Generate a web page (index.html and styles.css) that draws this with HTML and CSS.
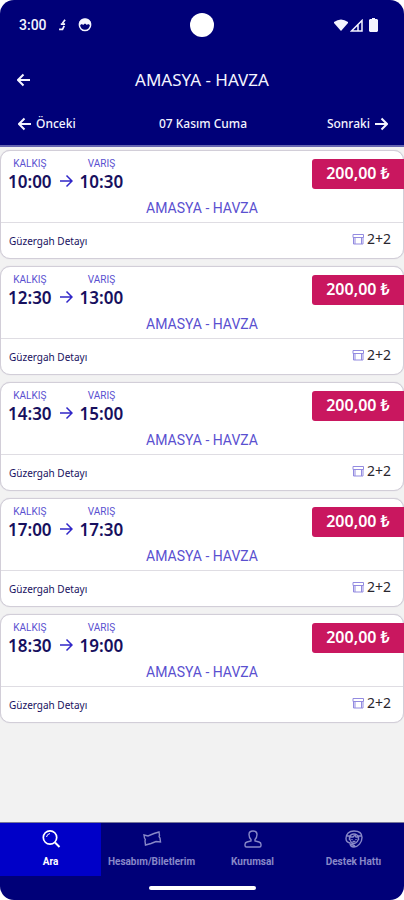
FILE: index.html
```html
<!DOCTYPE html>
<html lang="tr">
<head>
<meta charset="utf-8">
<meta name="viewport" content="width=device-width, initial-scale=1">
<title>AMASYA - HAVZA</title>
<link rel="stylesheet" href="styles.css">
</head>
<body>
<svg class="sprite" aria-hidden="true">
  <symbol id="arrow" viewBox="0 0 14 14"><path d="M1 7h12M7.500 1.500L13 7l-5.500 5.500"/></symbol>
  <symbol id="arrow-back" viewBox="0 0 14 14"><path d="M13 7H1M6.500 1.500L1 7l5.500 5.500"/></symbol>
  <symbol id="seat" viewBox="0 0 12 12"><path d="M1 1.500h10.500v3H1zM1.500 4.500v6.500h9.500v-6.500M3 11V4.500M9.500 11V4.500"/></symbol>
</svg>
<div class="app">
  <header class="header">
    <div class="status">
      <div class="status-side">
        <span class="clock">3:00</span>
        <svg class="glyph-small" viewBox="0 0 8 14" fill="none" stroke="currentColor" stroke-width="2"><path d="M7 1L4 5M7 6H2M6 8l-2 4H0"/></svg>
        <svg class="glyph-face" viewBox="0 0 14 14"><circle cx="7" cy="7" r="5.600" fill="none" stroke="currentColor" stroke-width="1.500"/><path d="M1 4l2-2.500Q7-1 11 1.500L13 4l-1 3-2-1-1 1-2-1.500L5 7 4 6 2 7z" fill="currentColor"/></svg>
      </div>
      <span class="camera"></span>
      <div class="status-side status-right">
        <svg class="wifi" viewBox="0 0 14 12"><path d="M0 3Q7-2 14 3v1L7 12 0 4z" fill="currentColor"/></svg>
        <svg class="signal" viewBox="0 0 13 13"><path d="M1.500 12L12 1.500V12zM8 5v7" fill="none" stroke="currentColor" stroke-width="1.500"/></svg>
        <svg class="battery" viewBox="0 0 9 14"><path d="M3 0h3v1h2l1 1v11l-1 1H1l-1-1V2l1-1h2z" fill="currentColor"/></svg>
      </div>
    </div>
    <div class="titlebar">
      <button class="icon-button" aria-label="Geri"><svg class="arrow"><use href="#arrow-back"/></svg></button>
      <h1>AMASYA - HAVZA</h1>
    </div>
    <div class="days">
      <button class="day-button"><svg class="arrow"><use href="#arrow-back"/></svg>Önceki</button>
      <span>07 Kasım Cuma</span>
      <button class="day-button day-next">Sonraki<svg class="arrow"><use href="#arrow"/></svg></button>
    </div>
  </header>

  <main class="trips">
    <article class="trip">
      <div class="trip-main">
        <div class="times">
          <div class="stop"><span class="label">KALKIŞ</span><time>10:00</time></div>
          <svg class="arrow trip-arrow"><use href="#arrow"/></svg>
          <div class="stop"><span class="label">VARIŞ</span><time>10:30</time></div>
        </div>
        <button class="price">200,00 ₺</button>
      </div>
      <p class="route">AMASYA - HAVZA</p>
      <div class="trip-foot"><a href="#detay">Güzergah Detayı</a><span class="seats"><svg><use href="#seat"/></svg>2+2</span></div>
    </article>
    <article class="trip">
      <div class="trip-main">
        <div class="times">
          <div class="stop"><span class="label">KALKIŞ</span><time>12:30</time></div>
          <svg class="arrow trip-arrow"><use href="#arrow"/></svg>
          <div class="stop"><span class="label">VARIŞ</span><time>13:00</time></div>
        </div>
        <button class="price">200,00 ₺</button>
      </div>
      <p class="route">AMASYA - HAVZA</p>
      <div class="trip-foot"><a href="#detay">Güzergah Detayı</a><span class="seats"><svg><use href="#seat"/></svg>2+2</span></div>
    </article>
    <article class="trip">
      <div class="trip-main">
        <div class="times">
          <div class="stop"><span class="label">KALKIŞ</span><time>14:30</time></div>
          <svg class="arrow trip-arrow"><use href="#arrow"/></svg>
          <div class="stop"><span class="label">VARIŞ</span><time>15:00</time></div>
        </div>
        <button class="price">200,00 ₺</button>
      </div>
      <p class="route">AMASYA - HAVZA</p>
      <div class="trip-foot"><a href="#detay">Güzergah Detayı</a><span class="seats"><svg><use href="#seat"/></svg>2+2</span></div>
    </article>
    <article class="trip">
      <div class="trip-main">
        <div class="times">
          <div class="stop"><span class="label">KALKIŞ</span><time>17:00</time></div>
          <svg class="arrow trip-arrow"><use href="#arrow"/></svg>
          <div class="stop"><span class="label">VARIŞ</span><time>17:30</time></div>
        </div>
        <button class="price">200,00 ₺</button>
      </div>
      <p class="route">AMASYA - HAVZA</p>
      <div class="trip-foot"><a href="#detay">Güzergah Detayı</a><span class="seats"><svg><use href="#seat"/></svg>2+2</span></div>
    </article>
    <article class="trip">
      <div class="trip-main">
        <div class="times">
          <div class="stop"><span class="label">KALKIŞ</span><time>18:30</time></div>
          <svg class="arrow trip-arrow"><use href="#arrow"/></svg>
          <div class="stop"><span class="label">VARIŞ</span><time>19:00</time></div>
        </div>
        <button class="price">200,00 ₺</button>
      </div>
      <p class="route">AMASYA - HAVZA</p>
      <div class="trip-foot"><a href="#detay">Güzergah Detayı</a><span class="seats"><svg><use href="#seat"/></svg>2+2</span></div>
    </article>
  </main>

  <footer class="footer">
    <nav class="tabs">
      <a class="tab active" href="#ara"><svg viewBox="0 0 20 20"><circle cx="9" cy="8.500" r="6.700" stroke-width="1.700"/><path d="M14 13.500l4.500 4.500" stroke-width="2"/><path d="M5.500 8Q6 5 9 4.500" stroke-width="1"/></svg>Ara</a>
      <a class="tab" href="#hesabim"><svg viewBox="0 0 20 20"><path d="M2 6l4 1 6-2.500 5-1.500.5 3.500q-1 1 .5 2.500l.5 4-4.500-.5-5 2-5.500 1.500-.5-4q1-1.500-.5-3z"/></svg>Hesabım/Biletlerim</a>
      <a class="tab" href="#kurumsal"><svg viewBox="0 0 20 20"><path d="M8 10.500C6.500 9 6 7 6 5.500 6 3 7.500 2 10 2s4 1 4 3.500c0 1.500-.5 3.500-2 5v1.500l4 1q2 .5 2 2.500v1q0 1.500-1.500 1.500h-13Q2 18 2 16.500v-1Q2 13.500 4 13l4-1z"/></svg>Kurumsal</a>
      <a class="tab" href="#destek"><svg viewBox="0 0 20 20"><path d="M10 2c5 0 8 2.500 8 6.500 0 5-4 9.500-8 9.500-3 0-4-2-4-4-2.500-.5-4-2-4-4.500C2 5 5 2 10 2zM5.500 8.500C6 6 8 5 10 5s4.500 1.500 4.500 4-2 5.500-4.500 5.500S6 12 5.500 8.500zM6 8h3l2-2 1 2h2M8 10v1M12 10v1M8.500 12.500h3M2.500 7h3v4M17.500 7h-3v4M7 15l4 2"/></svg>Destek Hattı</a>
    </nav>
    <div class="home"><span></span></div>
  </footer>
</div>
</body>
</html>
```
FILE: styles.css
```css
* { box-sizing: border-box; }

:root {
  --navy: #000078;
  --violet: #5a50d0;
}

body {
  margin: 0;
  background: #fff;
  font-family: "Noto Sans", sans-serif;
  color: #17105e;
}

button {
  border: 0;
  padding: 0;
  background: none;
  color: inherit;
  font: inherit;
}

a { color: inherit; text-decoration: none; }
svg { display: block; flex: none; }
.sprite { display: none; }

.app {
  min-height: 100vh;
  display: flex;
  flex-direction: column;
}

.header {
  background: var(--navy);
  color: #f4f4ff;
  border-radius: 14px 14px 0 0;
  border-bottom: 2px solid #6464b0;
}

.status {
  height: 50px;
  display: grid;
  grid-template-columns: 1fr 24px 1fr;
  align-items: center;
}

.status-side { display: flex; align-items: center; gap: 12px; padding-left: 19px; }
.status-right { justify-content: flex-end; gap: 2px; padding: 0 26px 0 0; }
.clock { font: 500 14px/20px Roboto, sans-serif; }
.glyph-small { width: 7px; height: 12px; }
.glyph-face { width: 14px; height: 14px; }
.wifi { width: 14px; height: 12px; }
.signal { width: 13px; height: 13px; }
.battery { width: 9px; height: 14px; margin-left: 4px; }
.camera { width: 24px; height: 24px; border-radius: 50%; background: #fff; }

.titlebar {
  height: 60px;
  padding: 0 16px;
  display: grid;
  grid-template-columns: 24px 1fr 24px;
  align-items: center;
}

.titlebar h1 {
  margin: 0;
  font-size: 17px;
  line-height: 24px;
  font-weight: 400;
  text-align: center;
}

.arrow {
  width: 14px;
  height: 14px;
  fill: none;
  stroke: currentColor;
  stroke-width: 2;
}

.icon-button .arrow { margin-left: 1px; }

.days {
  height: 35px;
  padding: 0 16px 8px 18px;
  display: grid;
  grid-template-columns: 1fr auto 1fr;
  align-items: center;
  font-size: 12px;
  line-height: 18px;
  font-weight: 500;
}

.day-button { display: flex; align-items: center; gap: 4px; }
.day-next { justify-self: end; }

.trips {
  flex: 1;
  padding: 3px 0 24px;
  display: flex;
  flex-direction: column;
  gap: 7px;
  background: #f2f2f2;
}

.trip {
  border: 1px solid #d2ced8;
  border-radius: 10px;
  background: #fff;
  box-shadow: 0 0 1px #c8c4d0;
}

.trip-main {
  height: 49px;
  padding: 6px 0 0 7px;
  display: flex;
  justify-content: space-between;
  align-items: flex-start;
}

.times { display: flex; align-items: flex-end; gap: 7px; }
.stop { display: flex; flex-direction: column; align-items: center; }
.label { font: 10px/14px Roboto, sans-serif; color: var(--violet); }
.stop time { font-size: 17px; line-height: 22px; font-weight: 600; }
.trip-arrow { margin-bottom: 5px; color: #3026c8; stroke-width: 1.5; }

.price {
  width: 92px;
  height: 30px;
  margin: 2px -1px 0 0;
  border-radius: 3px 0 0 3px;
  background: #c9175f;
  color: #fff;
  font-size: 16px;
  line-height: 26px;
  font-weight: 600;
  padding-bottom: 3px;
}

.route {
  height: 22px;
  margin: 0;
  font: 14px/16px Roboto, sans-serif;
  color: var(--violet);
  text-align: center;
}

.trip-foot {
  height: 36px;
  padding: 0 12px 0 8px;
  display: flex;
  justify-content: space-between;
  align-items: center;
  border-top: 1px solid #dfdde3;
  font-size: 10px;
  line-height: 16px;
}

.seats {
  display: flex;
  align-items: center;
  gap: 3px;
  padding-bottom: 3px;
  font-size: 14px;
  color: #28262e;
}

.seats svg {
  width: 12px;
  height: 12px;
  fill: none;
  stroke: #938be0;
}

.footer {
  background: var(--navy);
  border-top: 1px solid #777799;
  border-radius: 0 0 14px 14px;
}

.tabs {
  display: grid;
  grid-template-columns: repeat(4, 1fr);
}

.tab {
  height: 53px;
  padding-top: 6px;
  display: flex;
  flex-direction: column;
  align-items: center;
  gap: 6px;
  color: #8888c8;
  font: 700 10px/14px Roboto, sans-serif;
  white-space: nowrap;
}

.tab.active { background: #0000c8; color: #fff; }
.tab svg { width: 20px; height: 20px; fill: none; stroke: currentColor; stroke-width: 1.4; }

.home { height: 24px; display: grid; place-items: center; }
.home span { width: 107px; height: 4px; border-radius: 2px; background: #fff; }
```
